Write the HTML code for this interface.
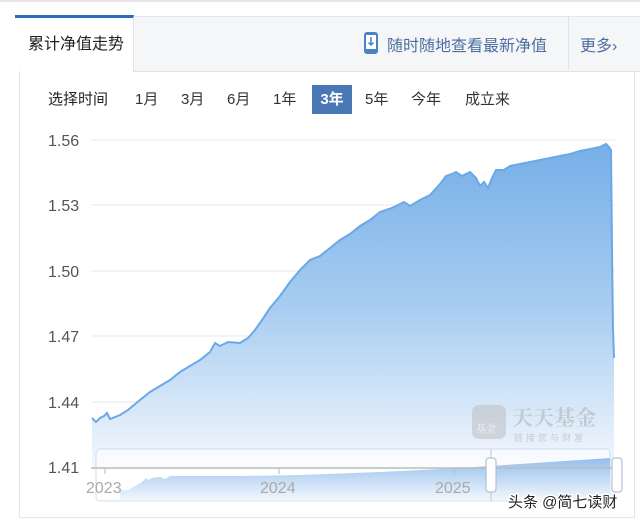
<!DOCTYPE html>
<html><head><meta charset="utf-8"><style>
body{margin:0;width:640px;height:522px;background:#fff;position:relative;overflow:hidden;font-family:"Liberation Sans","Noto Sans CJK SC",sans-serif}
.top{position:absolute;left:0;top:0;width:640px;height:2px;background:#e6e6e6}
.hdr{position:absolute;left:15px;top:16px;width:625px;height:54px;background:#f5f6f8;border-top:1px solid #e4e6ea;border-bottom:1px solid #dfe2e6}
.tab{position:absolute;left:15px;top:15px;width:119px;height:57px;background:#fff;border-top:3px solid #2c6cb8;border-right:1px solid #dfe2e6;box-sizing:border-box;font-size:16px;color:#222;line-height:54px;padding-left:13px;white-space:nowrap}
.panel{position:absolute;left:19px;top:71px;width:614px;height:446px;border:1px solid #e4e6ea;border-top:none}
.t{position:absolute;white-space:nowrap}
.sel{position:absolute;top:85px;height:29px;line-height:29px;font-size:15px;color:#333;white-space:nowrap}
</style></head><body>
<div class="top"></div>
<div class="hdr"></div>
<div class="tab">累计净值走势</div>
<svg style="position:absolute;left:363px;top:31px" width="17" height="24"><rect x="1" y="1" width="14" height="22" rx="3" fill="#4b82c3"/><rect x="3" y="4" width="10" height="14" fill="#fff"/><path d="M8 6v8M5.5 11.5L8 14l2.5-2.5" stroke="#4b82c3" stroke-width="1.5" fill="none"/></svg>
<div class="t" style="left:387px;top:32px;font-size:16px;color:#4d6fa0">随时随地查看最新净值</div>
<div style="position:absolute;left:568px;top:17px;width:1px;height:53px;background:#dfe2e6"></div>
<div class="t" style="left:580px;top:32px;font-size:16px;color:#4d6fa0">更多›</div>
<div class="panel"></div>
<div class="sel" style="left:48px;color:#222">选择时间</div>
<div class="sel" style="left:135px">1月</div>
<div class="sel" style="left:181px">3月</div>
<div class="sel" style="left:227px">6月</div>
<div class="sel" style="left:273px">1年</div>
<div class="sel" style="left:312px;width:40px;background:#4a78b6;color:#fff;text-align:center;font-weight:bold">3年</div>
<div class="sel" style="left:365px">5年</div>
<div class="sel" style="left:411px">今年</div>
<div class="sel" style="left:465px">成立来</div>
<svg style="position:absolute;left:0;top:0" width="640" height="522">
<defs><linearGradient id="g" gradientUnits="userSpaceOnUse" x1="0" y1="150" x2="0" y2="470"><stop offset="0" stop-color="#78b0e8"/><stop offset="0.5" stop-color="#a9cdf1"/><stop offset="1" stop-color="#f4f8fd"/></linearGradient>
<linearGradient id="g2" gradientUnits="userSpaceOnUse" x1="0" y1="455" x2="0" y2="500"><stop offset="0" stop-color="#8dbbea"/><stop offset="1" stop-color="#f2f7fd"/></linearGradient></defs>
<g font-size="16" fill="#555" font-family="Liberation Sans">
<text x="48" y="146">1.56</text><text x="48" y="211">1.53</text><text x="48" y="277">1.50</text><text x="48" y="342">1.47</text><text x="48" y="408">1.44</text><text x="48" y="473">1.41</text></g>
<g stroke="#e3e8f3" stroke-width="1"><line x1="91" y1="140" x2="615" y2="140"/><line x1="91" y1="205" x2="615" y2="205"/><line x1="91" y1="271" x2="615" y2="271"/><line x1="91" y1="336" x2="615" y2="336"/><line x1="91" y1="402" x2="615" y2="402"/></g>
<path d="M92 418L96 422L100 418L104 416L107 413L110 419L115 417L120 415L128 410L140 400L150 392L160 386L170 380L180 372L190 366L200 360L210 352L215 343L220 346L228 342L240 343L248 338L255 330L262 320L270 308L280 296L290 282L300 270L310 260L320 256L330 248L340 240L350 234L360 226L370 220L380 212L392 208L404 202L410 206L420 200L430 195L440 184L446 176L452 174L456 172L462 176L470 172L476 178L480 186L484 182L488 188L492 178L496 170L504 170L510 166L520 164L530 162L540 160L550 158L560 156L570 154L580 151L590 149L600 147L606 144L609 147L611 150L612 250L613 330L614 358L614 470L92 470Z" fill="url(#g)"/>
<path d="M92 418L96 422L100 418L104 416L107 413L110 419L115 417L120 415L128 410L140 400L150 392L160 386L170 380L180 372L190 366L200 360L210 352L215 343L220 346L228 342L240 343L248 338L255 330L262 320L270 308L280 296L290 282L300 270L310 260L320 256L330 248L340 240L350 234L360 226L370 220L380 212L392 208L404 202L410 206L420 200L430 195L440 184L446 176L452 174L456 172L462 176L470 172L476 178L480 186L484 182L488 188L492 178L496 170L504 170L510 166L520 164L530 162L540 160L550 158L560 156L570 154L580 151L590 149L600 147L606 144L609 147L611 150L612 250L613 330L614 358" fill="none" stroke="#6aa8e6" stroke-width="2"/>
<g opacity="0.5"><rect x="472" y="405" width="34" height="34" rx="7" fill="#bbb"/><text x="476" y="432" font-size="10" fill="#fff" font-family="Noto Serif CJK SC">基金</text><text x="512" y="425" font-size="21" fill="#aaa" font-family="Noto Serif CJK SC" font-weight="bold">天天基金</text><text x="514" y="441" font-size="9" fill="#aaa" font-family="Noto Sans CJK SC" letter-spacing="3">链接您与财富</text></g>
<rect x="96" y="449" width="514" height="52" rx="4" fill="rgba(255,255,255,0.6)" stroke="#cfdcee"/>
<path d="M120 490L128 490L135 486L142 482L146 478L148 480L152 478L160 477L165 479L170 476L240 476L300 475L380 472L460 468L520 464L580 460L610 458L610 500L120 500Z" fill="url(#g2)"/>
<line x1="91" y1="468" x2="615" y2="468" stroke="#bbb" stroke-width="1.5"/>
<line x1="105" y1="468" x2="105" y2="474" stroke="#bbb"/><line x1="279" y1="468" x2="279" y2="474" stroke="#bbb"/><line x1="454" y1="468" x2="454" y2="474" stroke="#bbb"/>
<g font-size="16" fill="#aaa" font-family="Liberation Sans"><text x="86" y="493">2023</text><text x="260" y="493">2024</text><text x="435" y="493">2025</text></g>
<line x1="491" y1="449" x2="491" y2="501" stroke="#b8c6de"/>
<rect x="486" y="458" width="10" height="34" rx="3" fill="#fff" stroke="#a5b6d3"/>
<rect x="612" y="458" width="10" height="34" rx="3" fill="#fff" stroke="#a5b6d3"/>
<text x="508" y="507" font-size="15" fill="#222" font-family="Liberation Sans,Noto Sans CJK SC" stroke="#fff" stroke-width="3" paint-order="stroke">头条 @简七读财</text>
</svg>
</body></html>
